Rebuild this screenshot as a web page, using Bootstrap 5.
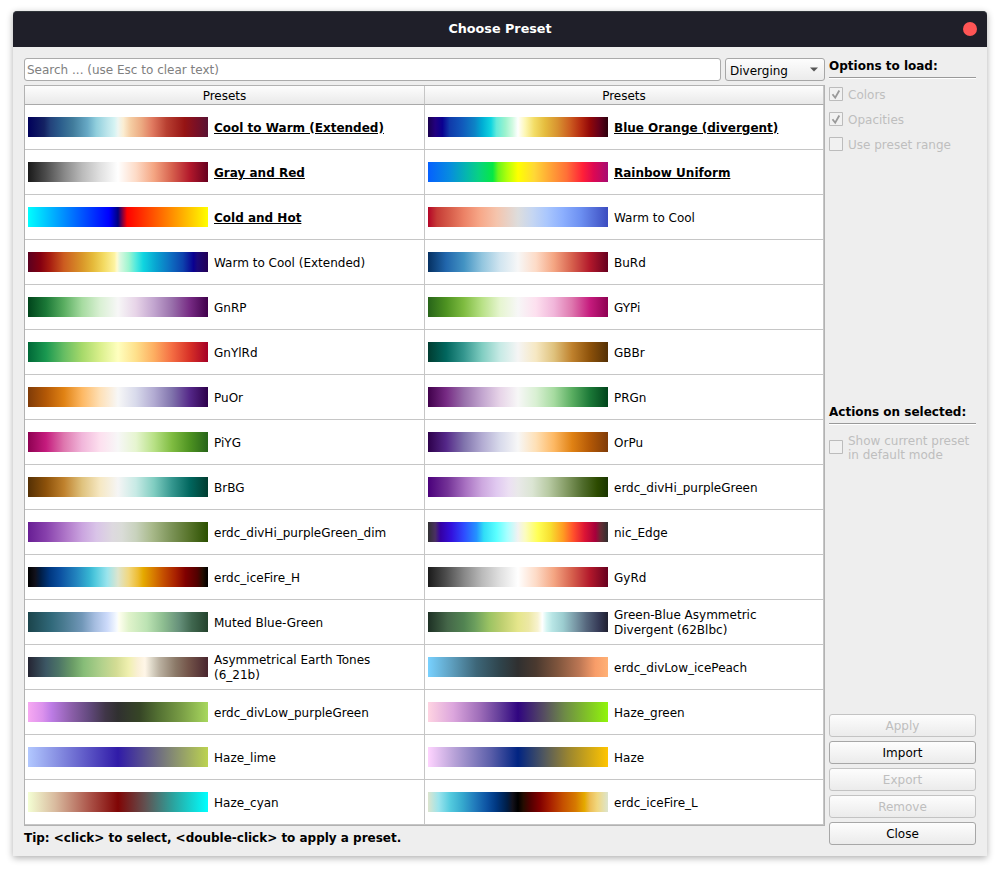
<!DOCTYPE html>
<html lang="en">
<head>
<meta charset="utf-8">
<title>Choose Preset</title>
<link href="https://cdn.jsdelivr.net/npm/bootstrap@5.3.0/dist/css/bootstrap.min.css" rel="stylesheet">
<style>
  body { font: 12px/14px "DejaVu Sans", sans-serif; color: #000; background: #fff; width: 1000px; height: 871px; overflow: hidden; }
  .dialog { margin: 11px 13px 0; height: 845px; background: #eee; border-radius: 4px 4px 0 0; box-shadow: 0 2px 7px rgba(0,0,0,.32); }
  .titlebar { height: 36px; background: #1f1f29; color: #fff; border-radius: 4px 4px 0 0; border-top: 1px solid #30353a; font-size: 12.75px; padding-bottom: 1px; }
  .close-dot { width: 14px; height: 14px; right: 10px; top: 10px; background: #ff5555; border: 0; padding: 0; }
  .dialog-main { padding: 11px 11px 0; gap: 4px; }
  .preset-pane { width: 801px; }
  .side-pane { width: 147px; height: 787px; }
  .form-control.search-box { height: 23px; width: 697px; flex: none; font-size: 12px; line-height: 14px; padding: 1px 2px 0; border: 1px solid #ababab; border-radius: 3px; }
  .search-box::placeholder { color: #808080; }
  .btn.qt { height: 23px; padding: 0; font-size: 12px; line-height: 23px; color: #000; border: 1px solid #a7a7a7; border-radius: 3px; background: linear-gradient(#fdfdfd, #ebebeb); opacity: 1; }
  .btn.qt:disabled { color: #bebebe; border-color: #c3c3c3; }
  .btn.category { width: 100px; padding: 0 6px 0 4px; line-height: 14px; }
  .category span { padding-top: 2px; }
  .preset-table { margin-top: 4px; border: 1px solid #b2b2b2; background: #fff; height: 741px; }
  .preset-grid { display: grid; grid-template-columns: 400px 399px; }
  .head-cell { height: 19px; line-height: 14px; padding-top: 3px; border-bottom: 1px solid #a9a9a9; border-right: 1px solid #c6c6c6; background: linear-gradient(#fdfdfd, #e9e9e9); }
  .preset-cell { height: 45px; padding-left: 3px; border-right: 1px solid #c6c6c6; border-bottom: 1px solid #c6c6c6; line-height: 15px; }
  .preset-name { width: 185px; margin-left: 6px; padding-top: 2px; }
  .preset-name.featured { font-weight: bold; text-decoration: underline; white-space: nowrap; }
  .swatch { width: 180px; height: 20px; flex: none; }
  .tip { margin-top: 5px; letter-spacing: -.01px; }
  .group-title { height: 20px; padding-top: 1px; border-bottom: 1px solid #999; box-shadow: 0 1px #fff; }
  .option { color: #bebebe; gap: 5px; height: 14px; }
  .option svg { flex: none; }
  .option span { padding-top: 2px; }
</style>
</head>
<body>
<main class="dialog">
  <header class="titlebar position-relative d-flex align-items-center justify-content-center fw-bold">
    <span>Choose Preset</span>
    <button class="close-dot rounded-circle position-absolute" aria-label="Close window"></button>
  </header>
  <div class="dialog-main d-flex">
    <section class="preset-pane">
      <div class="d-flex gap-1">
        <input class="form-control search-box" type="text" placeholder="Search ... (use Esc to clear text)" aria-label="Search">
        <button class="btn qt category d-flex align-items-center justify-content-between"><span>Diverging</span>
          <svg width="8" height="5" viewBox="0 0 8 5"><path d="M0 .5h8L4 4.5z" fill="#555"/></svg></button>
      </div>
      <div class="preset-table">
        <div class="preset-grid" id="presets">
          <div class="head-cell text-center">Presets</div>
          <div class="head-cell text-center">Presets</div>
        </div>
      </div>
      <div class="tip fw-bold">Tip: &lt;click&gt; to select, &lt;double-click&gt; to apply a preset.</div>
    </section>
    <aside class="side-pane d-flex flex-column">
      <div class="group-title fw-bold">Options to load:</div>
      <div class="option d-flex align-items-center" style="margin-top:9px">
        <svg width="14" height="14" viewBox="0 0 14 14"><path d="M.5.5h13v13H.5z" fill="#f1f1f1" stroke="#bcbcbc"/><path d="M3.5 7.2l2.7 3.5L10.3 3.5" fill="none" stroke="#999" stroke-width="1.8"/></svg><span>Colors</span></div>
      <div class="option d-flex align-items-center" style="margin-top:11px">
        <svg width="14" height="14" viewBox="0 0 14 14"><path d="M.5.5h13v13H.5z" fill="#f1f1f1" stroke="#bcbcbc"/><path d="M3.5 7.2l2.7 3.5L10.3 3.5" fill="none" stroke="#999" stroke-width="1.8"/></svg><span>Opacities</span></div>
      <div class="option d-flex align-items-center" style="margin-top:11px">
        <svg width="14" height="14" viewBox="0 0 14 14"><path d="M.5.5h13v13H.5z" fill="#f1f1f1" stroke="#bcbcbc"/></svg><span>Use preset range</span></div>
      <div class="group-title fw-bold" style="margin-top:253px">Actions on selected:</div>
      <div class="option d-flex align-items-center" style="margin-top:16px">
        <svg width="14" height="14" viewBox="0 0 14 14"><path d="M.5.5h13v13H.5z" fill="#f1f1f1" stroke="#bcbcbc"/></svg><span>Show current preset<br>in default mode</span></div>
      <div class="mt-auto d-grid gap-1">
        <button class="btn qt" disabled>Apply</button>
        <button class="btn qt">Import</button>
        <button class="btn qt" disabled>Export</button>
        <button class="btn qt" disabled>Remove</button>
        <button class="btn qt">Close</button>
      </div>
    </aside>
  </div>
</main>
<script src="https://cdn.jsdelivr.net/npm/bootstrap@5.3.0/dist/js/bootstrap.bundle.min.js"></script>
<script>
  // Each preset is a name and its colour stops: "hex" or "hex position%"; stops without a position are evenly spaced.
  const maps = {
    BuRd: '053061,2166ac,4393c3,92c5de,d1e5f0,f7f7f7,fddbc7,f4a582,d6604d,b2182b,67001f',
    PRGn: '40004b,762a83,9970ab,c2a5cf,e7d4e8,f7f7f7,d9f0d3,a6dba0,5aae61,1b7837,00441b',
    PiYG: '8e0152,c51b7d,de77ae,f1b6da,fde0ef,f7f7f7,e6f5d0,b8e186,7fbc41,4d9221,276419',
    BrBG: '543005,8c510a,bf812d,dfc27d,f6e8c3,f5f5f5,c7eae5,80cdc1,35978f,01665e,003c30',
    PuOr: '7f3b08,b35806,e08214,fdb863,fee0b6,f7f7f7,d8daeb,b2abd2,8073ac,542788,2d004b',
    GyRd: '1a1a1a,4d4d4d,878787,bababa,e0e0e0,ffffff,fddbc7,f4a582,d6604d,b2182b,67001f'
  };
  const flip = s => s.split(',').reverse().join(',');
  const presets = [
    ['Cool to Warm (Extended)', '00005a,142263 9%,23427b 12.5%,2b5d8c 18%,417c9c 25%,67a9c5 33%,91cfdd 38%,bce5eb 44%,d5f3f3 48%,eef6f2 50%,fbedd2 53%,f5cda3 57%,ecaa82 63%,e07a60 69%,b83f31 77%,961414 87%,7c1024 93%,591233', 1],
    ['Blue Orange (divergent)', '19004e,22007f 4%,0a0090 8%,103aaa 12%,1159bb 19%,0d83c6 26%,00acd4 30%,10d5e0 35%,62eadb 38%,9df3ce 43%,d2fae2 47%,ffffff 50%,fdf7b4 54%,f3dd66 59%,e5bc3e 65%,d89230 72%,cc5c20 79%,b52a10 85%,920808 90%,65001a 95%,2d000c', 1],
    ['Gray and Red', maps.GyRd, 1],
    ['Rainbow Uniform', '0560ff,078cdf 12%,05b5b0 21%,08d184 28%,05e845 36%,6bf51b 39%,b2ff0b 44%,ffff00 50%,ffd836 59%,ffa936 67%,ff7037 77%,ff2038 86%,dd0852 92%,a70b72', 1],
    ['Cold and Hot', '00ffff,0000ff 45%,000080 50%,ff0000 55%,ffff00', 1],
    ['Warm to Cool', 'b40426,c63b36 5%,d9614d 13%,ec8266 20%,f7a889 29%,f5c4ac 38%,dddddd 50%,c5d6f2 58%,aac7fd 66%,8caffe 75%,6c8ff1 85%,3b4cc0'],
    ['Warm to Cool (Extended)', '5a0020,850010 7%,a61b10 12%,cc5c20 20%,d99629 30%,e5b93a 36%,f3da62 42%,fdf3a0 48%,fffbd1 49.5%,ddf8e1 51%,9df5d0 56%,50e9de 60%,10d5e0 64%,08a4d1 71%,0d76c4 78%,0d42ad 86%,0a0090 92%,1a087b 94%,230055'],
    ['BuRd', maps.BuRd],
    ['GnRP', flip(maps.PRGn)],
    ['GYPi', flip(maps.PiYG)],
    ['GnYlRd', '006837,1a9850,66bd63,a6d96a,d9ef8b,ffffbf,fee08b,fdae61,f46d43,d73027,a50026'],
    ['GBBr', flip(maps.BrBG)],
    ['PuOr', maps.PuOr],
    ['PRGn', maps.PRGn],
    ['PiYG', maps.PiYG],
    ['OrPu', flip(maps.PuOr)],
    ['BrBG', maps.BrBG],
    ['erdc_divHi_purpleGreen', '4a007b,743397 11%,a972c2 21%,cda8df 30%,e0c9f0 38%,ece0f3 45%,e9e9e9 50%,dbe5d3 58%,b8caa3 67%,839a63 77%,506c2c 86%,2d4b00 94%,1a3500'],
    ['erdc_divHi_purpleGreen_dim', '681e94,8740ac 10%,b27bcb 22%,caa4df 30%,d9c4e8 38%,ddd9df 47%,dadcd8 52%,c8d2bd 60%,a8b98a 69%,7e955a 79%,59752d 89%,2b5000'],
    ['nic_Edge', '303030,4a3062 4%,3500a5 7%,3311dd 13%,2e4cff 20%,2493ff 27%,30ddf7 31%,5bffff 38%,a8ffff 44%,f2f2f2 50%,fbfcc0 54%,ffff55 61%,f7df30 68%,ff9c22 75%,ff4d2c 81%,dc1435 87%,a6003b 93%,652c34 96%,303030'],
    ['erdc_iceFire_H', '000000,12111b 4%,001d45 7%,003780 12%,0c51a1 18%,2385bf 27%,36b4d2 34%,53cade 37.5%,9ae4ed 44%,dde5ce 50%,f1d77e 56%,edbd35 61%,e5aa00 64%,d67900 70%,c55000 75%,a82000 82%,800000 87.5%,520000 94%,250c00 97%,000000'],
    ['GyRd', maps.GyRd],
    ['Muted Blue-Green', '1b444b,31697a 13%,4a7b91 20%,7197b8 30%,a4bcdf 37%,ccdafa 44%,f7fbff 49.5%,fffff0 50.5%,e0f3cb 56%,bce3b3 66%,8ebe91 75%,66907a 84%,40674f 91%,24432d'],
    ['Green-Blue Asymmetric Divergent (62Blbc)', '1d3024,456749 11%,528452 20%,6b9e5d 26%,9bc363 34%,becf70 41%,e5e68b 50%,ede8a5 56%,f8f3d0 61%,ffffff 63.5%,d4f5f2 66%,b8e5e5 69%,9ccdd0 75%,7897a5 82%,56677d 88%,353a56 95%,202030'],
    ['Asymmetrical Earth Tones (6_21b)', '242432,3c5764 10%,4c7466 17%,6b9d67 25%,87bd78 31%,b2d18c 41%,d3dc94 49%,f0f0b0 56%,faf0d6 61%,fff6e8 65%,dad4c5 69%,bbb1a1 73%,8b7968 82%,74554a 89%,49252e'],
    ['erdc_divLow_icePeach', '78d1ff,5e9fbf 13%,3d6678 27%,2f444c 40%,303030 50%,4a392f 60%,7f553d 72%,bb7654 84%,f89d69 93%,ffb176'],
    ['erdc_divLow_purpleGreen', 'f7a9f2,dc92ed 8%,bd7ce5 13%,8c5faa 24%,62497d 34%,403648 43%,303030 50%,364526 62%,526f32 72%,789c45 85%,a8d85e'],
    ['Haze_green', 'ffd4e2,dca6dd 14%,9d6cb8 29%,623c99 40%,300580 50%,575060 65%,6e8b46 76%,91f50b'],
    ['Haze_lime', 'b2c8ff,301ba8 50%,bcd350'],
    ['Haze', 'ffd4ff,b6a1d7 15%,5a5ea9 35%,012482 50%,4e5660 64%,9a8530 78%,ffc500'],
    ['Haze_cyan', 'f4ffd4,d9bb9f 15%,a94f45 35%,800505 50%,625050 65%,2da09b 80%,00ffff'],
    ['erdc_iceFire_L', 'dde5ce,9ae4ed 6%,53cade 12.5%,36a9ce 19%,217bbc 26%,0c51a1 33%,003780 38%,001d45 44%,12111b 47%,000000 50%,250c00 53%,520000 57%,800000 62%,a82000 68%,c55000 75%,d67900 82%,e5aa00 87%,edbd55 90%,f1d77e 94%,dde5ce']
  ];
  const grid = document.getElementById('presets');
  for (const [name, stops, featured] of presets) {
    const cell = document.createElement('div');
    cell.className = 'preset-cell d-flex align-items-center';
    const swatch = document.createElement('div');
    swatch.className = 'swatch';
    swatch.style.background = `linear-gradient(to right, ${stops.split(',').map(s => '#' + s).join(', ')})`;
    const label = document.createElement('div');
    label.className = 'preset-name' + (featured ? ' featured' : '');
    label.textContent = name;
    cell.append(swatch, label);
    grid.append(cell);
  }
</script>
</body>
</html>
